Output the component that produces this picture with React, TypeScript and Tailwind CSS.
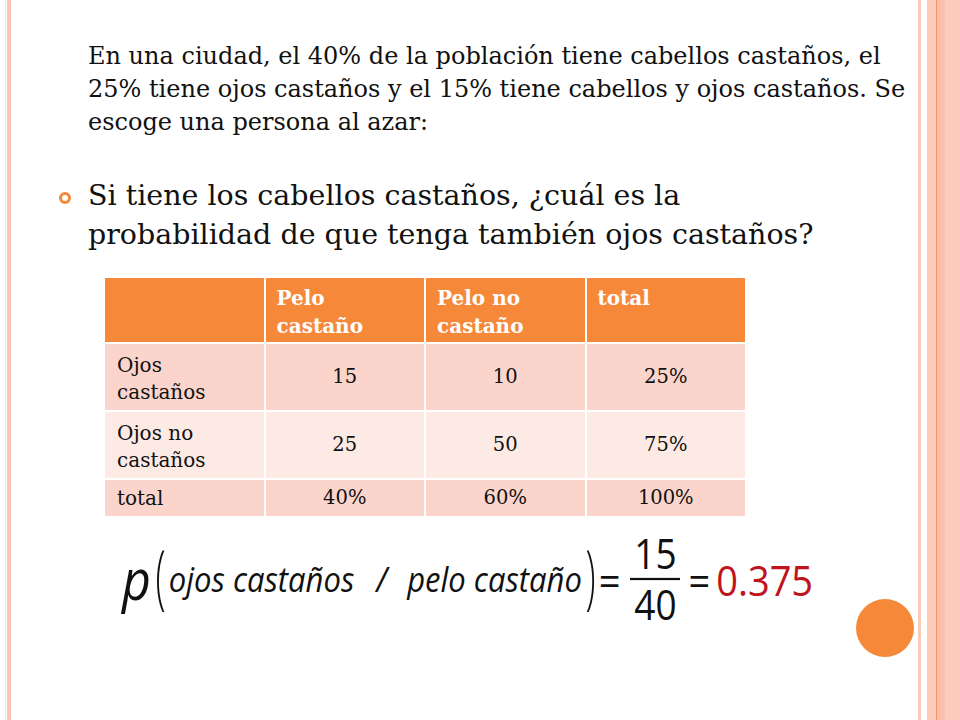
import React from "react";

const serif = "font-['DejaVu_Serif','Liberation_Serif',serif]";

function Cell({ children, className = "" }: { children?: React.ReactNode; className?: string }) {
  return <div className={className}>{children}</div>;
}

export default function App() {
  const head = "bg-[#f6883a] text-white font-bold text-[20px] leading-[28px] pl-[11px] pt-[6px]";
  const r1 = "bg-[#fbd5cb]";
  const r2 = "bg-[#fdeae5]";
  const num = "flex items-center justify-center text-[19.5px]";
  const lab = "text-[20px] leading-[27px] pl-[12px] pt-[8px]";
  return (
    <div className={`relative w-[960px] h-[720px] bg-white flex overflow-hidden text-[#111] ${serif}`}>
      {/* left decoration */}
      <div className="flex h-full w-[11px] shrink-0">
        <div className="w-[5px]" />
        <div className="w-[1px] bg-[#fcd7ca]" />
        <div className="w-[1px]" />
        <div className="w-[4px] bg-[#fcc7b6]" />
      </div>

      {/* content */}
      <div className="flex-1 flex flex-col pl-[77px] pt-[40px]">
        <div className="text-[24px] leading-[33px] whitespace-nowrap">
          <div>En una ciudad, el 40% de la población tiene cabellos castaños, el</div>
          <div>25% tiene ojos castaños y el 15% tiene cabellos y ojos castaños. Se</div>
          <div>escoge una persona al azar:</div>
        </div>

        <div className="flex mt-[37px] -ml-[29px]">
          <div className="w-[29px] pt-[16px]">
            <div className="w-[12px] h-[12px] rounded-full border-[3px] border-[#f5883b]" />
          </div>
          <div className="text-[28.5px] leading-[39px] whitespace-nowrap">
            <div>Si tiene los cabellos castaños, ¿cuál es la</div>
            <div>probabilidad de que tenga también ojos castaños?</div>
          </div>
        </div>

        <div className="ml-[17px] mt-[24px] w-[640px] grid grid-cols-4 grid-rows-[64px_66px_66px_36px] gap-[2px] bg-white">
          <Cell className={head} />
          <Cell className={head}>
            Pelo
            <br />
            castaño
          </Cell>
          <Cell className={head}>
            Pelo no
            <br />
            castaño
          </Cell>
          <Cell className={head}>total</Cell>

          <Cell className={`${r1} ${lab}`}>
            Ojos
            <br />
            castaños
          </Cell>
          <Cell className={`${r1} ${num}`}>15</Cell>
          <Cell className={`${r1} ${num}`}>10</Cell>
          <Cell className={`${r1} ${num}`}>25%</Cell>

          <Cell className={`${r2} ${lab}`}>
            Ojos no
            <br />
            castaños
          </Cell>
          <Cell className={`${r2} ${num}`}>25</Cell>
          <Cell className={`${r2} ${num}`}>50</Cell>
          <Cell className={`${r2} ${num}`}>75%</Cell>

          <Cell className={`${r1} text-[20px] flex items-center pl-[12px]`}>total</Cell>
          <Cell className={`${r1} ${num}`}>40%</Cell>
          <Cell className={`${r1} ${num}`}>60%</Cell>
          <Cell className={`${r1} ${num}`}>100%</Cell>
        </div>

        {/* formula */}
        <div className="mt-[8px] ml-[34px] h-[110px] flex items-center font-['Open_Sans',sans-serif] text-[#111] scale-y-[1.12] origin-center">
          <span className="italic text-[50px] leading-none">p</span>
          <span className="text-[62px] font-light leading-none ml-[1px] -mt-[8px] scale-x-[0.6]">(</span>
          <span className="italic text-[31px] leading-none">ojos castaños</span>
          <span className="italic text-[31px] leading-none ml-[22px] mr-[20px]">/</span>
          <span className="italic text-[31px] leading-none">pelo castaño</span>
          <span className="text-[62px] font-light leading-none -mt-[8px] scale-x-[0.6]">)</span>
          <span className="text-[38px] leading-none">=</span>
          <div className="flex flex-col items-center ml-[10px] mr-[8px]">
            <span className="text-[37px] leading-[36px]">15</span>
            <div className="w-[50px] h-[2px] bg-[#111] my-[4px]" />
            <span className="text-[37px] leading-[36px]">40</span>
          </div>
          <span className="text-[38px] leading-none">=</span>
          <span className="text-[38px] leading-none text-[#c0141c] ml-[6px]">0.375</span>
        </div>
      </div>

      {/* right decoration */}
      <div className="flex h-full w-[42px] shrink-0">
        <div className="w-[3px] bg-[#fbc9b8]" />
        <div className="w-[6px]" />
        <div className="w-[9px] bg-[#fdcbba]" />
        <div className="w-[1px] bg-[#f0955f]" />
        <div className="w-[8px] bg-[#fcc1ad]" />
        <div className="flex-1 bg-[#fdcbbb]" />
      </div>

      {/* orange circle */}
      <div className="absolute left-[856px] top-[599px] w-[58px] h-[58px] rounded-full bg-[#f6883a]" />
    </div>
  );
}
